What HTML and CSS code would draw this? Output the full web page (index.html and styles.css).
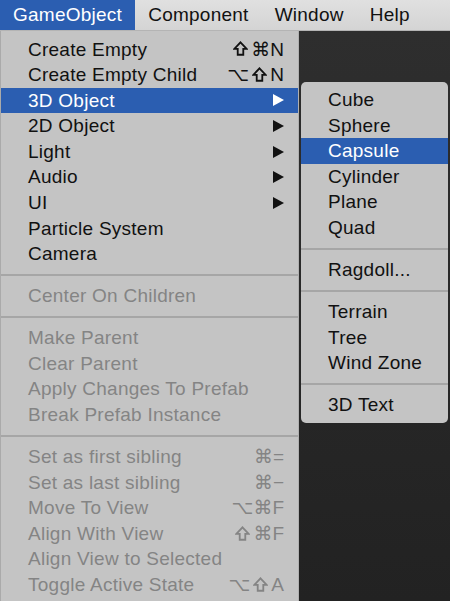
FILE: index.html
```html
<!DOCTYPE html>
<html lang="en">
<head>
  <meta charset="UTF-8" />
  <meta name="viewport" content="width=device-width, initial-scale=1.0"/>
  <title>GameObject menu</title>
  <link rel="stylesheet" href="styles.css">
</head>
<body>
  <div class="menubar">
    <span class="menubar-item open">GameObject</span>
    <span class="menubar-item">Component</span>
    <span class="menubar-item">Window</span>
    <span class="menubar-item">Help</span>
  </div>

  <div class="workspace">
    <ul class="menu main-menu">
      <li class="item"><span>Create Empty</span><span class="shortcut"><svg class="shift" viewBox="0 0 14 14"><path d="M7 1.2 L12.8 7.4 H9.6 V12.8 H4.4 V7.4 H1.2 Z" /></svg>⌘N</span></li>
      <li class="item"><span>Create Empty Child</span><span class="shortcut">⌥<svg class="shift" viewBox="0 0 14 14"><path d="M7 1.2 L12.8 7.4 H9.6 V12.8 H4.4 V7.4 H1.2 Z" /></svg>N</span></li>
      <li class="item active"><span>3D Object</span><svg class="arrow" width="11" height="12" viewBox="0 0 11 12"><polygon points="0,0 11,6 0,12" /></svg></li>
      <li class="item"><span>2D Object</span><svg class="arrow" width="11" height="12" viewBox="0 0 11 12"><polygon points="0,0 11,6 0,12" /></svg></li>
      <li class="item"><span>Light</span><svg class="arrow" width="11" height="12" viewBox="0 0 11 12"><polygon points="0,0 11,6 0,12" /></svg></li>
      <li class="item"><span>Audio</span><svg class="arrow" width="11" height="12" viewBox="0 0 11 12"><polygon points="0,0 11,6 0,12" /></svg></li>
      <li class="item"><span>UI</span><svg class="arrow" width="11" height="12" viewBox="0 0 11 12"><polygon points="0,0 11,6 0,12" /></svg></li>
      <li class="item"><span>Particle System</span></li>
      <li class="item"><span>Camera</span></li>
      <li class="separator"></li>
      <li class="item disabled"><span>Center On Children</span></li>
      <li class="separator"></li>
      <li class="item disabled"><span>Make Parent</span></li>
      <li class="item disabled"><span>Clear Parent</span></li>
      <li class="item disabled"><span>Apply Changes To Prefab</span></li>
      <li class="item disabled"><span>Break Prefab Instance</span></li>
      <li class="separator"></li>
      <li class="item disabled"><span>Set as first sibling</span><span class="shortcut">⌘=</span></li>
      <li class="item disabled"><span>Set as last sibling</span><span class="shortcut">⌘−</span></li>
      <li class="item disabled"><span>Move To View</span><span class="shortcut">⌥⌘F</span></li>
      <li class="item disabled"><span>Align With View</span><span class="shortcut"><svg class="shift" viewBox="0 0 14 14"><path d="M7 1.2 L12.8 7.4 H9.6 V12.8 H4.4 V7.4 H1.2 Z" /></svg>⌘F</span></li>
      <li class="item disabled"><span>Align View to Selected</span></li>
      <li class="item disabled"><span>Toggle Active State</span><span class="shortcut">⌥<svg class="shift" viewBox="0 0 14 14"><path d="M7 1.2 L12.8 7.4 H9.6 V12.8 H4.4 V7.4 H1.2 Z" /></svg>A</span></li>
    </ul>

    <ul class="menu sub-menu">
      <li class="item"><span>Cube</span></li>
      <li class="item"><span>Sphere</span></li>
      <li class="item active"><span>Capsule</span></li>
      <li class="item"><span>Cylinder</span></li>
      <li class="item"><span>Plane</span></li>
      <li class="item"><span>Quad</span></li>
      <li class="separator"></li>
      <li class="item"><span>Ragdoll...</span></li>
      <li class="separator"></li>
      <li class="item"><span>Terrain</span></li>
      <li class="item"><span>Tree</span></li>
      <li class="item"><span>Wind Zone</span></li>
      <li class="separator"></li>
      <li class="item"><span>3D Text</span></li>
    </ul>
  </div>
</body>
</html>
```

FILE: styles.css
```css
body {
  margin: 0;
  width: 450px;
  height: 601px;
  overflow: hidden;
  background: #2b2b2b;
  font-family: "Liberation Sans", Arial, "DejaVu Sans", sans-serif;
  font-size: 19px;
  letter-spacing: 0.25px;
  color: #111;
}
.menubar {
  display: flex;
  height: 31px;
  background: linear-gradient(#e0e0e0, #d4d4d4);
  border-bottom: 1px solid #b4b4b4;
  box-sizing: border-box;
}
.menubar-item {
  padding: 0 13px;
  line-height: 30px;
}
.menubar-item.open {
  background: #2b5eb1;
  color: white;
}
.workspace {
  display: flex;
  align-items: flex-start;
  height: 570px;
  background: linear-gradient(#2e2e2e, #222);
}
.menu {
  list-style: none;
  margin: 0;
  background: #c4c4c4;
}
.main-menu {
  width: 299px;
  height: 100%;
  padding: 5.5px 0 0;
  border-left: 1px solid #aaa;
  border-right: 1px solid #b0b0b0;
  box-sizing: border-box;
}
.sub-menu {
  width: 147px;
  margin-top: 51px;
  margin-left: 2px;
  padding: 5px 0;
  border-radius: 5px;
}
.item {
  display: flex;
  justify-content: space-between;
  align-items: center;
  height: 25.6px;
  line-height: 25.6px;
  padding: 0 14px 0 27px;
  white-space: nowrap;
}
.item.active {
  background: #2b5eb1;
  color: white;
}
.item.disabled {
  color: #848484;
}
.shortcut {
  display: inline-flex;
  align-items: center;
  gap: 3px;
  letter-spacing: 0;
}
.shift {
  width: 15px;
  height: 15px;
  margin-top: -1px;
  fill: none;
  stroke: currentColor;
  stroke-width: 1.7;
}
.arrow {
  fill: #111;
}
.item.active .arrow {
  fill: white;
}
.separator {
  height: 2px;
  margin: 7px 0 7.4px;
  background: #a6a6a6;
}
```
